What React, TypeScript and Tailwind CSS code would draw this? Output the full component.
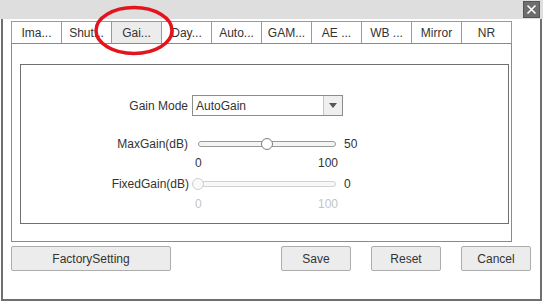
const tabs = ["Ima...", "Shut...", "Gai...", "Day...", "Auto...", "GAM...", "AE ...", "WB ...", "Mirror", "NR"];

function Slider({ value, disabled }: { value: number; disabled?: boolean }) {
  const track = disabled ? "border-[#d2d2d2] bg-[#f7f7f7]" : "border-[#9a9a9a] bg-[#f4f4f4]";
  const thumb = disabled ? "border-[#cfcfcf] bg-[#f9f9f9]" : "border-[#7f7f7f] bg-white";
  return (
    <div className="relative h-[16px] w-[150px] px-[6px]">
      <div className="flex h-full items-center">
        <div className={`h-[6px] w-full rounded-full border ${track}`} />
      </div>
      <div
        className={`absolute top-[2px] h-[12px] w-[12px] -translate-x-1/2 rounded-full border ${thumb}`}
        style={{ left: `calc(6px + ${value / 100} * (100% - 12px))` }}
      />
    </div>
  );
}

function Btn({ label, w }: { label: string; w: string }) {
  return (
    <div
      className={`flex h-[25px] ${w} items-center justify-center rounded-[2px] border border-[#adadad] bg-[#ececec] text-[12px] text-[#333]`}
    >
      {label}
    </div>
  );
}

export default function App() {
  return (
    <div
      className="relative flex h-[303px] w-[543px] flex-col overflow-hidden bg-white"
      style={{ fontFamily: '"Liberation Sans", Arial, sans-serif' }}
    >
      <div className="flex h-[19px] shrink-0 justify-end bg-[#dedede] pr-[3px] pt-[1px]">
        <div className="flex h-[17px] w-[17px] items-center justify-center border border-[#555] bg-[#6e6e6e]">
          <svg width="11" height="11" viewBox="0 0 11 11">
            <path d="M1.5 1.5 L9.5 9.5 M9.5 1.5 L1.5 9.5" stroke="#fff" strokeWidth="1.6" />
          </svg>
        </div>
      </div>

      <div className="mx-[1px] mb-[2px] flex flex-1 flex-col border-x-2 border-b-2 border-[#6f6f6f] pl-[8px] pt-[2px]">
        <div className="flex">
          {tabs.map((t, i) => (
            <div
              key={t}
              className={`flex h-[22px] w-[50px] items-center justify-center border-l border-t border-[#9a9a9a] text-[12px] text-[#333] ${
                i === 9 ? "w-[51px] border-r" : ""
              } ${i === 2 ? "bg-[#ececec]" : "bg-white"}`}
            >
              {t}
            </div>
          ))}
        </div>

        <div className="h-[199px] w-[501px] border border-[#8a8a8a] pl-[8px] pr-[2px] pt-[20px]">
          <div className="flex h-[160px] flex-col border border-[#6f6f6f] pt-[30px] text-[12px] text-[#333]">
            <div className="flex h-[21px] items-center">
              <div className="w-[168px] pr-[1px] text-right">Gain Mode</div>
              <div className="ml-[3px] flex h-[21px] w-[151px] border border-[#8c8c8c]">
                <div className="flex flex-1 items-center pl-[3px]">AutoGain</div>
                <div className="flex w-[19px] items-center justify-center border-l border-[#c6c6c6] bg-[#efefef]">
                  <svg width="8" height="5" viewBox="0 0 8 5">
                    <path d="M0 0 H8 L4 5 Z" fill="#555" />
                  </svg>
                </div>
              </div>
            </div>

            <div className="mt-[20px] flex h-[16px] items-center">
              <div className="w-[168px] pr-[1px] text-right">MaxGain(dB)</div>
              <div className="ml-[3px]">
                <Slider value={50} />
              </div>
              <div className="ml-[2px]">50</div>
            </div>
            <div className="mt-[4px] flex h-[14px] items-center">
              <div className="ml-[171px] flex w-[150px] justify-between pl-[3px] pr-[4px]">
                <span>0</span>
                <span>100</span>
              </div>
            </div>

            <div className="mt-[6px] flex h-[16px] items-center">
              <div className="w-[168px] text-right">FixedGain(dB)</div>
              <div className="ml-[3px]">
                <Slider value={0} disabled />
              </div>
              <div className="ml-[2px]">0</div>
            </div>
            <div className="mt-[5px] flex h-[14px] items-center text-[#c4c4c4]">
              <div className="ml-[171px] flex w-[150px] justify-between pl-[3px] pr-[4px]">
                <span>0</span>
                <span>100</span>
              </div>
            </div>
          </div>
        </div>

        <div className="mt-[4px] flex">
          <Btn label="FactorySetting" w="w-[160px]" />
          <div className="ml-[110px] flex gap-[20px]">
            <Btn label="Save" w="w-[70px]" />
            <Btn label="Reset" w="w-[70px]" />
            <Btn label="Cancel" w="w-[70px]" />
          </div>
        </div>
      </div>

      <svg className="pointer-events-none absolute left-[93px] top-[5px]" width="82" height="51" viewBox="0 0 82 51">
        <ellipse cx="41" cy="25.5" rx="38" ry="23" fill="none" stroke="#e3141c" strokeWidth="3.5" />
      </svg>
    </div>
  );
}
